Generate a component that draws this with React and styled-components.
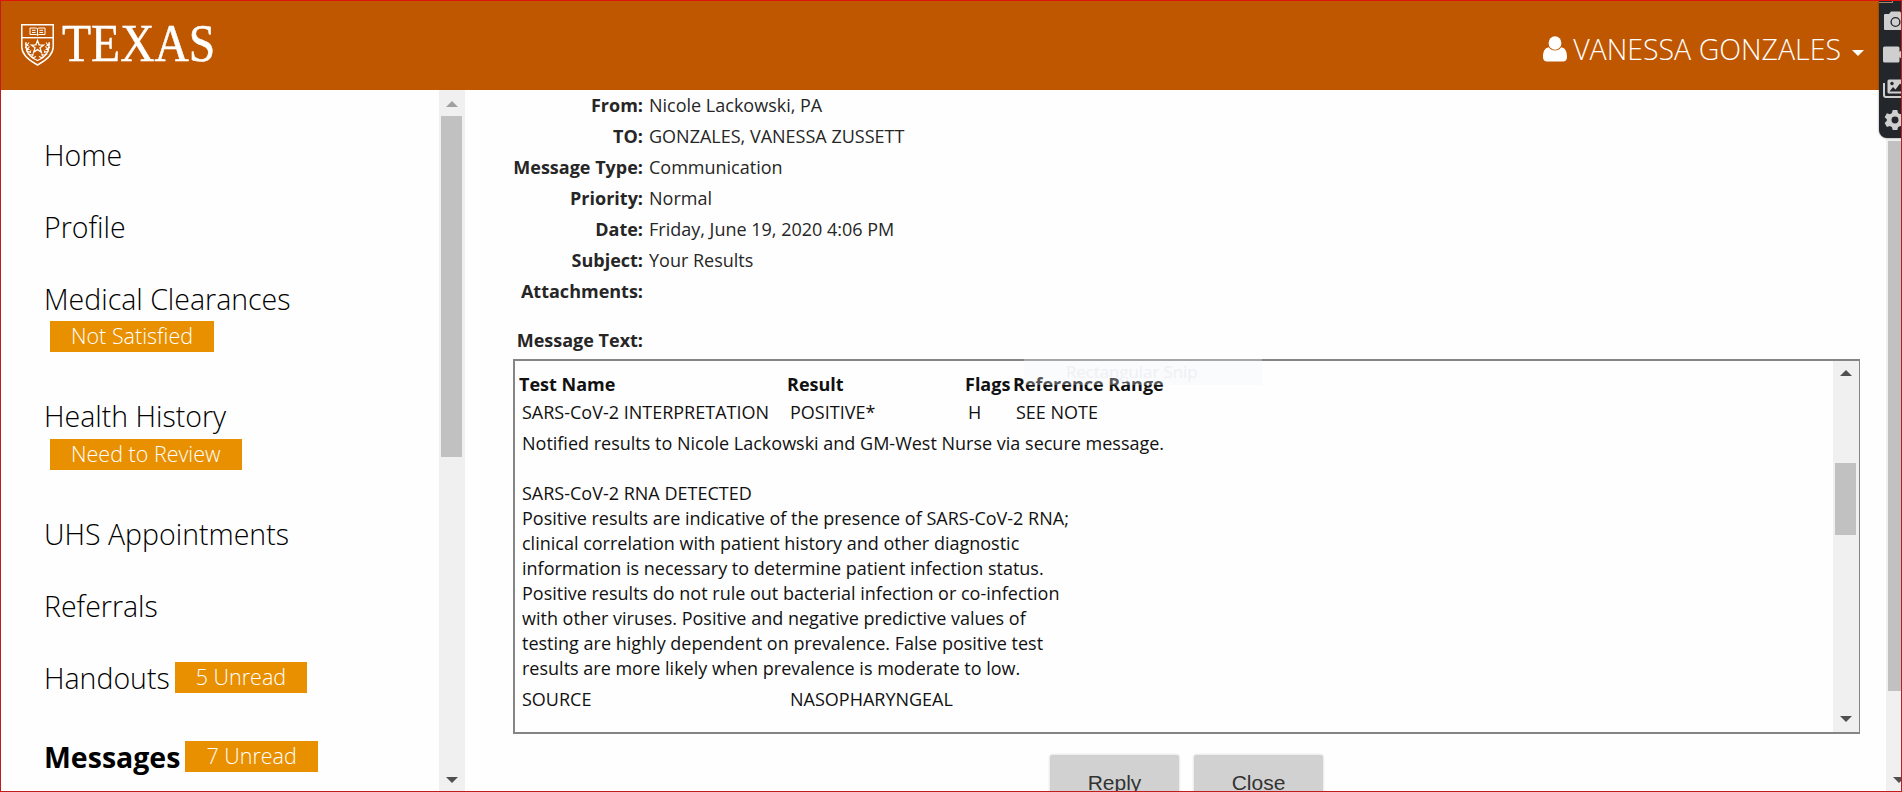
import React from "react";
import styled, { createGlobalStyle } from "styled-components";

const GlobalStyle = createGlobalStyle`
  * { box-sizing: border-box; }
  body {
    margin: 0;
    overflow: hidden;
    background: #fff;
    font-family: "Open Sans", "Liberation Sans", sans-serif;
  }
`;

const Page = styled.div`
  position: relative;
  display: flex;
  flex-direction: column;
  width: 1902px;
  height: 792px;
  overflow: hidden;
  background: #fefefe;
`;

const CaptureFrame = styled.div`
  position: absolute;
  inset: 0;
  z-index: 5;
  border: 1px solid #c01c1c;
  border-top-color: #e0140a;
  pointer-events: none;
`;

const Header = styled.header`
  flex: none;
  display: flex;
  justify-content: space-between;
  height: 90px;
  padding: 0 38px 0 20px;
  background: #bf5700;
  color: #fff;
`;

const Brand = styled.div`
  display: flex;
  align-items: flex-start;
  gap: 7px;
  padding-top: 23px;
`;

const Wordmark = styled.span`
  font: 52px/52px "Liberation Serif", serif;
  color: #fff;
  margin-top: -5px;
  -webkit-text-stroke: 0.5px #fff;
  transform: scaleX(0.915);
  transform-origin: left;
`;

const UserMenu = styled.div`
  display: flex;
  align-items: center;
  padding-top: 8px;
  font-size: 28.5px;
  font-weight: 300;
  line-height: 40px;
  white-space: nowrap;

  svg {
    margin-right: 6px;
  }
`;

const Caret = styled.span`
  margin: 7px 0 0 11px;
  border: 6px solid transparent;
  border-top-color: #fff;
  border-bottom: 0;
`;

const Columns = styled.div`
  flex: 1;
  display: flex;
  min-height: 0;
`;

const Sidebar = styled.nav`
  flex: none;
  width: 439px;
  padding: 29px 0 0 44px;
  overflow: hidden;
`;

const NavItem = styled.div`
  display: flex;
  flex-direction: ${(p) => (p.$stacked ? "column" : "row")};
  align-items: ${(p) => (p.$stacked ? "flex-start" : "center")};
  height: ${(p) => p.$height || 72}px;
  margin-top: ${(p) => p.$gap || 0}px;
`;

const NavLabel = styled.span`
  font-size: 28.5px;
  line-height: 72px;
  font-weight: ${(p) => (p.$active ? 700 : 300)};
  color: #000;
  white-space: nowrap;
`;

const Badge = styled.span`
  height: 31px;
  margin: ${(p) => (p.$stacked ? `${p.$shift}px 0 0 6px` : "-1px 0 0 5px")};
  padding: 0 21px;
  background: #e89000;
  color: #fff;
  font-size: 21.5px;
  font-weight: 300;
  line-height: 30px;
  white-space: nowrap;
`;

const Track = styled.div`
  flex: none;
  display: flex;
  flex-direction: column;
  align-items: center;
  width: ${(p) => p.$width || 26}px;
  padding: ${(p) => p.$pad};
  background: #f0f0f0;
  overflow: hidden;
`;

const Thumb = styled.div`
  flex: none;
  width: 21px;
  height: ${(p) => p.$height}px;
  margin: ${(p) => p.$offset}px 1px 0 0;
  background: #c1c1c1;
`;

const Arrow = styled.span`
  flex: none;
  border: 6px solid transparent;
  ${(p) => (p.$up ? "border-top: 0;" : "border-bottom: 0; margin-top: auto;")}
  ${(p) => (p.$up ? "border-bottom-color" : "border-top-color")}: ${(p) => p.$color || "#505050"};
`;

const Main = styled.main`
  flex: 1;
  min-width: 0;
  padding: 0 26px 0 48px;
  font-size: 18px;
  color: #262626;
`;

const Field = styled.div`
  display: grid;
  grid-template-columns: 130px 1fr;
  column-gap: 6px;
  margin-top: ${(p) => p.$gap || 0}px;
  line-height: 31px;
`;

const FieldName = styled.span`
  font-weight: 700;
  text-align: right;
  white-space: nowrap;
`;

const MessageBox = styled.section`
  position: relative;
  display: flex;
  height: 375px;
  margin-top: 3px;
  border: 2px solid #858585;
  border-right-width: 1px;
  color: #111;
`;

const Results = styled.div`
  flex: 1;
  padding: 8px 0 0 4px;
`;

const ResultRow = styled.div`
  display: grid;
  grid-template-columns: 268px 178px 48px 1fr;
  padding: 3px 0 3px 3px;
  line-height: 25px;
  white-space: nowrap;
`;

const ResultHead = styled(ResultRow)`
  padding: 3px 0 0;
  font-weight: 700;
`;

const Note = styled.p`
  margin: 0;
  padding: 3px 0 3px 3px;
  line-height: 25px;
  white-space: pre;
`;

const FadingTip = styled.div`
  position: absolute;
  left: 509px;
  top: -2px;
  width: 238px;
  height: 26px;
  padding-left: 42px;
  background: rgba(240, 245, 253, 0.3);
  color: #f0f0f2;
  font-size: 16.8px;
  line-height: 25px;
`;

const Actions = styled.div`
  display: flex;
  justify-content: center;
  gap: 15px;
  margin-top: 21px;
`;

const Button = styled.button`
  width: 129px;
  height: 66px;
  padding: 0 0 11px;
  border: 0;
  border-radius: 2px;
  background: #d1d1d1;
  box-shadow: 0 0 3px rgba(0, 0, 0, 0.18);
  color: #333;
  font: 21px "Liberation Sans", Arial, sans-serif;
`;

const ToolDock = styled.aside`
  position: absolute;
  top: 0;
  right: 0;
  z-index: 2;
  display: flex;
  flex-direction: column;
  align-items: flex-start;
  width: 23px;
  height: 138px;
  border-bottom-left-radius: 8px;
  background: #23272c;
  box-shadow: 0 0 2px rgba(0, 0, 0, 0.5);
  overflow: hidden;

  svg {
    flex: none;
    margin-left: 4px;
  }
`;

const DockEdge = styled.div`
  flex: none;
  width: 14px;
  height: 3px;
  border: 1px solid #a88868;
  border-left: 0;
`;

function Shield() {
  return (
    <svg width="35" height="44" viewBox="0 0 35 44" fill="none" stroke="#fff">
      <path d="M1.8 1.8H33.2V24C33.2 33 24 38.5 17.5 42C11 38.5 1.8 33 1.8 24Z" strokeWidth="1.5" />
      <path d="M2 14.7H33" strokeWidth="1.4" />
      <path d="M10 5H16.5L17.5 6L18.5 5H25V11.5H18.8L17.5 12.5L16.2 11.5H10ZM17.5 6V12M12 7.3H15.6M12 9.5H15.6M19.4 7.3H23M19.4 9.5H23" strokeWidth="1" />
      <path d="M17.5 17.5L19.1 21.8L23.6 22L20 24.8L21.3 29.2L17.5 26.6L13.7 29.2L15 24.8L11.4 22L15.9 21.8Z" strokeWidth="1.3" />
      <path d="M6 19Q4.5 32 17.5 37.5Q30.5 32 29 19" strokeWidth="1.2" />
      <path
        d="M5 20.5L8.5 23M5 24L9.5 26.5M6.2 28L11 29.5M9 31.8L13.5 32M12.5 35L16 33.5M9 19.5L6 23.5M9.5 23.5L6.5 27.5M11 27.5L8 31.5M13.5 30.5L11.5 34.5M30 20.5L26.5 23M30 24L25.5 26.5M28.8 28L24 29.5M26 31.8L21.5 32M22.5 35L19 33.5M26 19.5L29 23.5M25.5 23.5L28.5 27.5M24 27.5L27 31.5M21.5 30.5L23.5 34.5"
        strokeWidth="1.1"
      />
    </svg>
  );
}

function UserIcon() {
  return (
    <svg width="24" height="26" viewBox="0 0 24 26" fill="#fff">
      <ellipse cx="12" cy="7" rx="6.400" ry="6.800" />
      <path d="M5.800 11.300C7.300 13.500 9.500 14.600 12 14.600C14.500 14.600 16.700 13.500 18.200 11.300C22.500 12 24 16 24 21C24 24 22.300 25.500 20 25.500H4C1.700 25.500 0 24 0 21C0 16 1.500 12 5.800 11.300Z" />
    </svg>
  );
}

function CameraIcon() {
  return (
    <svg width="24" height="20" viewBox="0 0 24 20" style={{ marginTop: 8 }}>
      <path d="M2 3H6L8 .5H17L19 3H23V19H2Q1 19 1 18V4Q1 3 2 3Z" fill="#cfcfcf" />
      <circle cx="12.500" cy="11" r="4.400" fill="none" stroke="#23272c" strokeWidth="1.400" />
    </svg>
  );
}

function VideoIcon() {
  return (
    <svg width="24" height="17" viewBox="0 0 24 17" style={{ marginTop: 15 }}>
      <path d="M1.500 .5H15Q16.500 .5 16.500 2V6L21 2V15L16.500 11V15Q16.500 16.500 15 16.500H1.500Q0 16.500 0 15V2Q0 .5 1.500 .5Z" fill="#cfcfcf" />
    </svg>
  );
}

function GalleryIcon() {
  return (
    <svg width="24" height="20" viewBox="0 0 24 20" style={{ marginTop: 16 }}>
      <path d="M1 4V16Q1 18 3 18H20" fill="none" stroke="#cfcfcf" strokeWidth="2" />
      <path d="M6 .5H22V14.500H6Q4.500 14.500 4.500 13V2Q4.500 .5 6 .5Z" fill="#cfcfcf" />
      <circle cx="9" cy="4.500" r="1.700" fill="#23272c" />
      <path d="M6.500 12.500L10 8L12.500 10.500L17 4.500L22 10V12.500Z" fill="#23272c" />
    </svg>
  );
}

function GearIcon() {
  return (
    <svg width="22" height="22" viewBox="0 0 24 24" style={{ marginTop: 10, marginLeft: 5 }}>
      <path
        fill="#cfcfcf"
        fillRule="evenodd"
        d="M9.500 1H14.500L15.300 4.300L17.600 5.600L20.800 4.600L23.300 9L20.900 11.300V12.900L23.300 15.200L20.800 19.500L17.600 18.500L15.300 19.800L14.500 23H9.500L8.700 19.800L6.400 18.500L3.200 19.500L.7 15.200L3.100 12.900V11.300L.7 9L3.200 4.600L6.400 5.600L8.700 4.300ZM12 8.200A3.800 3.800 0 1 0 12 15.800A3.800 3.800 0 1 0 12 8.200Z"
      />
    </svg>
  );
}

const navItems = [
  { label: "Home" },
  { label: "Profile" },
  { label: "Medical Clearances", badge: "Not Satisfied", stacked: true, height: 117, shift: -14 },
  { label: "Health History", badge: "Need to Review", stacked: true, height: 118, shift: -13 },
  { label: "UHS Appointments" },
  { label: "Referrals" },
  { label: "Handouts", badge: "5 Unread" },
  { label: "Messages", badge: "7 Unread", active: true, gap: 7 },
];

const fields = [
  ["From:", "Nicole Lackowski, PA"],
  ["TO:", "GONZALES, VANESSA ZUSSETT"],
  ["Message Type:", "Communication"],
  ["Priority:", "Normal"],
  ["Date:", "Friday, June 19, 2020 4:06 PM"],
  ["Subject:", "Your Results"],
  ["Attachments:", ""],
];

const note = `Notified results to Nicole Lackowski and GM-West Nurse via secure message.

SARS-CoV-2 RNA DETECTED
Positive results are indicative of the presence of SARS-CoV-2 RNA;
clinical correlation with patient history and other diagnostic
information is necessary to determine patient infection status.
Positive results do not rule out bacterial infection or co-infection
with other viruses. Positive and negative predictive values of
testing are highly dependent on prevalence. False positive test
results are more likely when prevalence is moderate to low.`;

export default function App() {
  return (
    <Page>
      <GlobalStyle />
      <Header>
        <Brand>
          <Shield />
          <Wordmark>TEXAS</Wordmark>
        </Brand>
        <UserMenu>
          <UserIcon />
          VANESSA GONZALES
          <Caret />
        </UserMenu>
      </Header>

      <Columns>
        <Sidebar>
          {navItems.map((n) => (
            <NavItem key={n.label} $stacked={n.stacked} $height={n.height} $gap={n.gap}>
              <NavLabel $active={n.active}>{n.label}</NavLabel>
              {n.badge && (
                <Badge $stacked={n.stacked} $shift={n.shift}>
                  {n.badge}
                </Badge>
              )}
            </NavItem>
          ))}
        </Sidebar>
        <Track $pad="11px 0 9px">
          <Arrow $up $color="#a0a0a0" />
          <Thumb $offset={9} $height={341} />
          <Arrow />
        </Track>

        <Main>
          {fields.map(([name, value]) => (
            <Field key={name}>
              <FieldName>{name}</FieldName>
              <span>{value}</span>
            </Field>
          ))}
          <Field $gap={18}>
            <FieldName>Message Text:</FieldName>
          </Field>
          <MessageBox>
            <FadingTip>Rectangular Snip</FadingTip>
            <Results>
              <ResultHead>
                <span>Test Name</span>
                <span>Result</span>
                <span>Flags</span>
                <span>Reference Range</span>
              </ResultHead>
              <ResultRow>
                <span>SARS-CoV-2 INTERPRETATION</span>
                <span>POSITIVE*</span>
                <span>H</span>
                <span>SEE NOTE</span>
              </ResultRow>
              <Note>{note}</Note>
              <ResultRow>
                <span>SOURCE</span>
                <span>NASOPHARYNGEAL</span>
              </ResultRow>
            </Results>
            <Track $pad="9px 0 10px">
              <Arrow $up />
              <Thumb $offset={87} $height={72} />
              <Arrow />
            </Track>
          </MessageBox>
          <Actions>
            <Button>Reply</Button>
            <Button>Close</Button>
          </Actions>
        </Main>

        <Track $width={16} $pad="0 0 9px 9px">
          <Thumb $offset={51} $height={550} />
          <Arrow />
        </Track>
      </Columns>

      <ToolDock>
        <DockEdge />
        <CameraIcon />
        <VideoIcon />
        <GalleryIcon />
        <GearIcon />
      </ToolDock>
      <CaptureFrame />
    </Page>
  );
}
